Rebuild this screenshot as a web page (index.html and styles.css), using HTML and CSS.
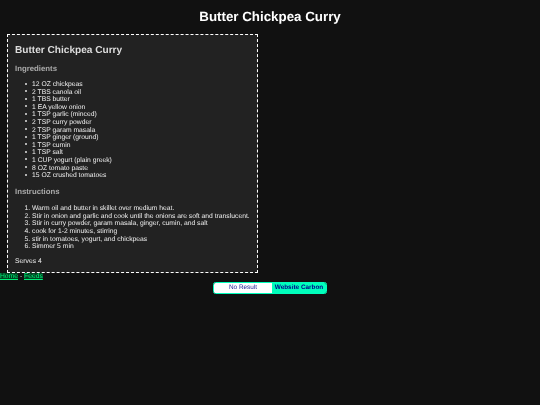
FILE: index.html
```html
<!DOCTYPE html>
<html lang="en">
<head>
<meta charset="utf-8">
<title>Butter Chickpea Curry</title>
<link rel="stylesheet" href="styles.css">
</head>
<body>
<h1 class="page-title">Butter Chickpea Curry</h1>
<main class="recipe">
  <h2 class="recipe-title">Butter Chickpea Curry</h2>
  <h3 class="section-title">Ingredients</h3>
  <ul class="list bullets">
    <li>12 OZ chickpeas</li>
    <li>2 TBS canola oil</li>
    <li>1 TBS butter</li>
    <li>1 EA yellow onion</li>
    <li>1 TSP garlic (minced)</li>
    <li>2 TSP curry powder</li>
    <li>2 TSP garam masala</li>
    <li>1 TSP ginger (ground)</li>
    <li>1 TSP cumin</li>
    <li>1 TSP salt</li>
    <li>1 CUP yogurt (plain greek)</li>
    <li>8 OZ tomato paste</li>
    <li>15 OZ crushed tomatoes</li>
  </ul>
  <h3 class="section-title">Instructions</h3>
  <ol class="list steps">
    <li>Warm oil and butter in skillet over medium heat.</li>
    <li>Stir in onion and garlic and cook until the onions are soft and translucent.</li>
    <li>Stir in curry powder, garam masala, ginger, cumin, and salt</li>
    <li>cook for 1-2 minutes, stirring</li>
    <li>stir in tomatoes, yogurt, and chickpeas</li>
    <li>Simmer 5 min</li>
  </ol>
  <p class="serves">Serves 4</p>
</main>
<nav class="links"><a href="#">Home</a> - <a href="#">Feeds</a></nav>
<div class="badge-row">
  <div class="badge"><span class="badge-result">No Result</span><span class="badge-label">Website Carbon</span></div>
</div>
</body>
</html>
```
FILE: styles.css
```css
html, body { margin: 0; padding: 0; background: #111; }
body {
  color: #eee;
  font-family: "Liberation Sans", Arial, sans-serif;
  font-size: 6.75px;
  line-height: 7.6px;
  min-height: 405px;
  text-rendering: geometricPrecision;
  filter: blur(0.25px);
}
.page-title {
  margin: 0;
  padding-top: 8px;
  height: 34px;
  box-sizing: border-box;
  font-size: 13.33px;
  line-height: 17px;
  font-weight: bold;
  color: #fff;
  text-align: center;
}
.recipe {
  box-sizing: border-box;
  width: 251px;
  height: 239px;
  margin-left: 7px;
  padding: 9px 6px 0 7px;
  background: #222;
  border: 1px dashed #fff;
}
.recipe-title {
  margin: 0 0 7px;
  font-size: 10.1px;
  line-height: 13px;
  font-weight: bold;
  color: #ddd;
}
.section-title {
  margin: 0;
  font-size: 7.8px;
  line-height: 10px;
  font-weight: bold;
  color: #aaa;
}
.list { margin: 7px 0 7.5px; padding-left: 17px; }
.steps { margin: 8px 0 6.5px; }
.bullets { list-style: none; }
.bullets li::before {
  content: "";
  display: inline-block;
  width: 2px;
  height: 2px;
  margin-left: -7px;
  margin-right: 5px;
  vertical-align: 1.5px;
  border-radius: 50%;
  background: #e0e0e0;
}
.serves { margin: 0; padding-top: 1px; }
.links { height: 9px; line-height: 7.6px; color: #ccc; }
.links a { color: #0e7; background: #042; text-decoration: underline; }
.badge-row { display: flex; justify-content: center; }
.badge {
  display: flex;
  width: 114px;
  height: 12px;
  box-sizing: border-box;
  border: 1px solid #00ffbc;
  border-radius: 2.5px;
  overflow: hidden;
  font-size: 6.4px;
  line-height: 10px;
  text-align: center;
  color: #22229a;
}
.badge-result { width: 58px; background: #fff; }
.badge-label { flex: 1; background: #00ffbc; font-weight: bold; color: #00008b; }
```
